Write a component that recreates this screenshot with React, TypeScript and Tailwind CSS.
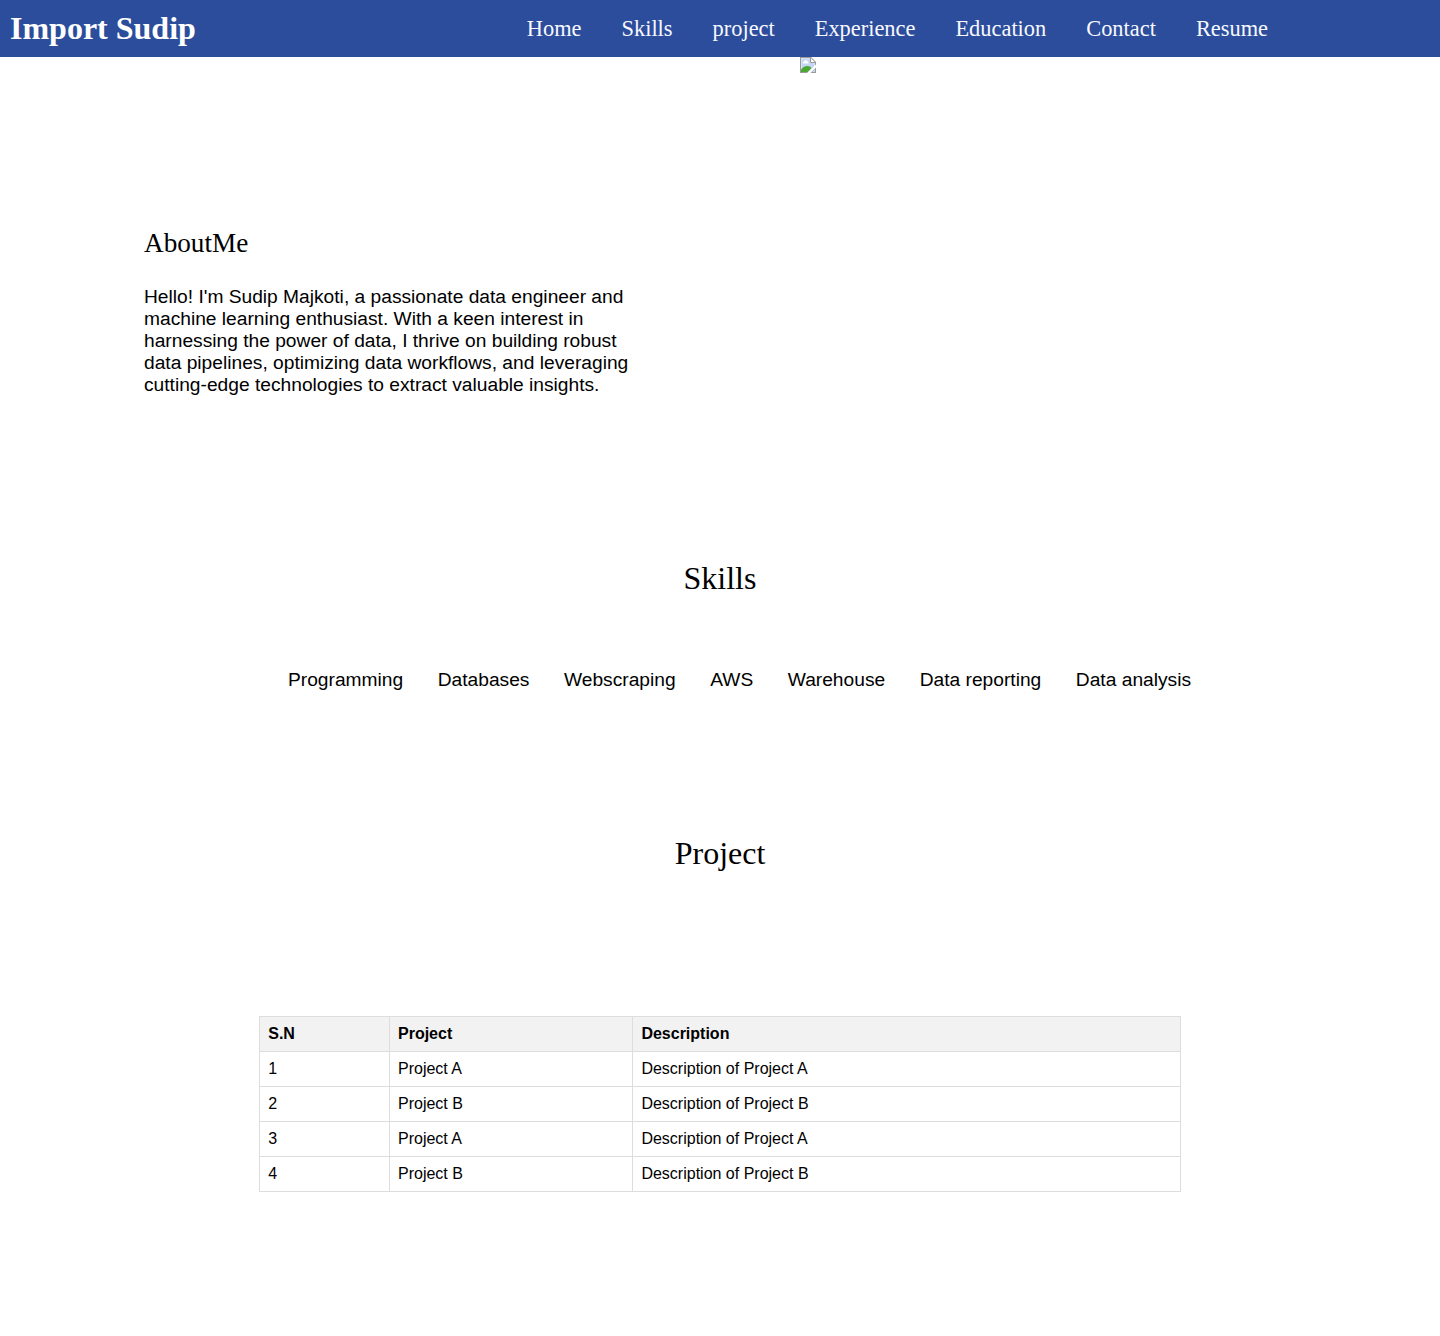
const links = ["Home", "Skills", "project", "Experience", "Education", "Contact", "Resume"];
const skills = ["Programming", "Databases", "Webscraping", "AWS", "Warehouse", "Data reporting", "Data analysis"];
const projects = ["A", "B", "A", "B"];

function MissingImage() {
  return (
    <svg width="16" height="16" viewBox="0 0 16 16" className="block">
      <path d="M0 0h11l5 5v3L8 16H0z" fill="#9a9a9a" />
      <path d="M1 1h9.6L15 5.400V9L9 15H1z" fill="#e8effb" />
      <path d="M1.500 1.500H10V6h4.500v3.500l-5.500 5H1.500z" fill="#c5d7f5" />
      <path d="M11 1.500V5h3.500z" fill="#fff" />
      <path d="M10.500 1v4.500H15" fill="none" stroke="#9a9a9a" />
      <path d="M3 6.500V5.400c0-.8.6-1.200 1.300-1.200C4.500 3.400 5 3 5.700 3c.8 0 1.300.5 1.500 1.200.8 0 1.300.5 1.300 1.200v1.100z" fill="#fff" />
      <path d="M1 15v-2.500C2.800 10 5 9 7.500 9c2 0 3.200.8 4 2L8 15z" fill="#4ca832" />
      <path d="M16 7.500V11l-5 5H7z" fill="#fff" />
      <path d="M16 10.500V16h-5.500z" fill="#9a9a9a" />
      <path d="M15 12v3h-3z" fill="#c5d7f5" />
    </svg>
  );
}

export default function App() {
  return (
    <div className="h-[1336px] bg-white font-['Liberation_Sans',sans-serif] text-black">
      <nav className="flex h-[57px] items-center bg-[#2b4d9b] font-['Liberation_Serif',serif] text-white">
        <h1 className="w-[526.8px] pl-[10px] text-[32px] leading-[37px] font-bold">Import Sudip</h1>
        <ul className="flex gap-10 text-[22.4px] leading-[25px] text-[#f8f8ff]">
          {links.map((link) => <li key={link}>{link}</li>)}
        </ul>
      </nav>
      <section className="flex h-[473px]">
        <div className="ml-36 w-[656px] pt-[170px]">
          <h2 className="font-['Liberation_Serif',serif] text-[27.2px] leading-8">AboutMe</h2>
          <p className="mt-[27px] w-[504px] text-[19.2px] leading-[22px]">
            Hello! I'm Sudip Majkoti, a passionate data engineer and machine learning enthusiast. With a keen interest in harnessing the power of data, I thrive on building robust data pipelines, optimizing data workflows, and leveraging cutting-edge technologies to extract valuable insights.
          </p>
        </div>
        <MissingImage />
      </section>
      <section className="h-[275px] pt-[30px]">
        <h2 className="text-center font-['Liberation_Serif',serif] text-[32px] leading-[37px]">Skills</h2>
        <ul className="mt-[72px] ml-72 flex gap-[34.56px] text-[19.2px] leading-[22px] whitespace-nowrap">
          {skills.map((skill) => <li key={skill}>{skill}</li>)}
        </ul>
      </section>
      <section className="pt-[30px]">
        <h2 className="text-center font-['Liberation_Serif',serif] text-[32px] leading-[37px]">Project</h2>
        <table className="mx-auto mt-36 w-[921.6px] table-fixed border-collapse text-left text-base leading-[18px]">
          <colgroup><col className="w-[129.8px]" /><col className="w-[243.4px]" /><col /></colgroup>
          <thead>
            <tr className="bg-[#f2f2f2]">
              {["S.N", "Project", "Description"].map((title) => <th key={title} className="border border-[#dddddd] p-2 font-bold">{title}</th>)}
            </tr>
          </thead>
          <tbody>
            {projects.map((name, i) => (
              <tr key={i}>
                <td className="border border-[#dddddd] p-2">{i + 1}</td>
                <td className="border border-[#dddddd] p-2">Project {name}</td>
                <td className="border border-[#dddddd] p-2">Description of Project {name}</td>
              </tr>
            ))}
          </tbody>
        </table>
      </section>
    </div>
  );
}
